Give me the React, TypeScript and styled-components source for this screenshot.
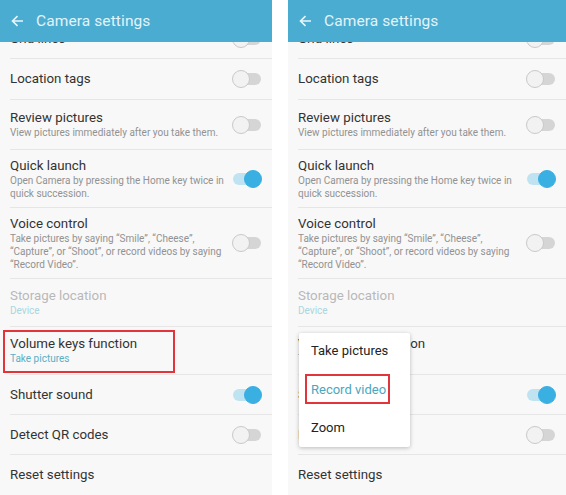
import styled, { createGlobalStyle } from "styled-components";

const GlobalStyle = createGlobalStyle`
  html, body {
    margin: 0;
    padding: 0;
    background: #ffffff;
  }
  body {
    font-family: Roboto, "Liberation Sans", sans-serif;
  }
`;

type RowData = {
  title: string;
  sub?: string[];
  height: number;
  toggle?: "on" | "off";
  tone?: "normal" | "disabled" | "value";
  boxed?: boolean;
};

const rows: RowData[] = [
  { title: "Location tags", height: 41, toggle: "off" },
  {
    title: "Review pictures",
    sub: ["View pictures immediately after you take them."],
    height: 50,
    toggle: "off",
  },
  {
    title: "Quick launch",
    sub: ["Open Camera by pressing the Home key twice in", "quick succession."],
    height: 58,
    toggle: "on",
  },
  {
    title: "Voice control",
    sub: [
      "Take pictures by saying \u201cSmile\u201d, \u201cCheese\u201d,",
      "\u201cCapture\u201d, or \u201cShoot\u201d, or record videos by saying",
      "\u201cRecord Video\u201d.",
    ],
    height: 71,
    toggle: "off",
  },
  { title: "Storage location", sub: ["Device"], height: 48, tone: "disabled" },
  {
    title: "Volume keys function",
    sub: ["Take pictures"],
    height: 48,
    tone: "value",
    boxed: true,
  },
  { title: "Shutter sound", height: 40, toggle: "on" },
  { title: "Detect QR codes", height: 40, toggle: "off" },
  { title: "Reset settings", height: 40 },
];

function Toggle({ on }: { on: boolean }) {
  return (
    <Switch>
      <Track $on={on} />
      <Knob $on={on} />
    </Switch>
  );
}

function BackArrow() {
  return (
    <svg width="13" height="12" viewBox="0 0 13 12">
      <path
        d="M12 6H1.8M6.5 1.2L1.5 6l5 4.8"
        fill="none"
        stroke="#e8f5fa"
        strokeWidth="1.6"
      />
    </svg>
  );
}

function Screen({ width, withMenu }: { width: number; withMenu?: boolean }) {
  return (
    <Panel $width={width}>
      <Header>
        <BackArrow />
        <HeaderTitle>Camera settings</HeaderTitle>
      </Header>
      <List>
        <Row $height={40} $cut>
          <RowText>
            <Title>Grid lines</Title>
          </RowText>
          <Toggle on={false} />
        </Row>
        {rows.map((r) => (
          <Row key={r.title} $height={r.height} $last={r.title === "Reset settings"}>
            {r.boxed && !withMenu && <Highlight />}
            <RowText>
              <Title $tone={r.tone}>{r.title}</Title>
              {r.sub?.map((s) => (
                <Sub key={s} $tone={r.tone}>
                  {s}
                </Sub>
              ))}
            </RowText>
            {r.toggle && <Toggle on={r.toggle === "on"} />}
          </Row>
        ))}
        {withMenu && (
          <Menu>
            <MenuItem>Take pictures</MenuItem>
            <MenuItem $active>
              <MenuMark>Record video</MenuMark>
            </MenuItem>
            <MenuItem>Zoom</MenuItem>
          </Menu>
        )}
      </List>
    </Panel>
  );
}

export default function App() {
  return (
    <>
      <GlobalStyle />
      <Page>
        <Screen width={272} />
        <Screen width={278} withMenu />
      </Page>
    </>
  );
}

const Page = styled.div`
  display: flex;
  gap: 16px;
  width: 566px;
  height: 495px;
  overflow: hidden;
`;

const Panel = styled.div<{ $width: number }>`
  width: ${({ $width }) => $width}px;
  flex-shrink: 0;
  height: 495px;
  display: flex;
  flex-direction: column;
  background: #f8f8f8;
  overflow: hidden;
`;

const Header = styled.div`
  height: 42px;
  flex-shrink: 0;
  background: #4aacd0;
  display: flex;
  align-items: center;
  gap: 12px;
  padding-left: 11px;
  position: relative;
  z-index: 2;
`;

const HeaderTitle = styled.span`
  color: #e3f3f9;
  font-size: 15.5px;
  letter-spacing: 0.1px;
`;

const List = styled.div`
  position: relative;
  flex: 1;
`;

const Row = styled.div<{ $height: number; $cut?: boolean; $last?: boolean }>`
  position: relative;
  height: ${({ $height }) => $height}px;
  margin-top: ${({ $cut }) => ($cut ? "-23px" : "0")};
  margin-left: 10px;
  padding-right: 10px;
  display: flex;
  align-items: center;
  justify-content: space-between;
  border-bottom: ${({ $last }) => ($last ? "none" : "1px solid #e6e6e6")};
  box-sizing: border-box;
`;

const RowText = styled.div`
  display: flex;
  flex-direction: column;
`;

const Title = styled.div<{ $tone?: string }>`
  font-size: 13.3px;
  line-height: 16px;
  color: ${({ $tone }) => ($tone === "disabled" ? "#b8b8b8" : "#333333")};
`;

const Sub = styled.div<{ $tone?: string }>`
  font-size: 10px;
  line-height: 13px;
  color: ${({ $tone }) =>
    $tone === "disabled" ? "#a9d6df" : $tone === "value" ? "#5aafc5" : "#929292"};
`;

const Switch = styled.div`
  position: relative;
  width: 30px;
  height: 18px;
  flex-shrink: 0;
  display: flex;
  align-items: center;
`;

const Track = styled.div<{ $on: boolean }>`
  width: 28px;
  height: 12px;
  margin-left: 1px;
  border-radius: 6px;
  background: ${({ $on }) => ($on ? "#bfe3f1" : "#d5d5d5")};
`;

const Knob = styled.div<{ $on: boolean }>`
  position: absolute;
  top: 0;
  left: ${({ $on }) => ($on ? "12px" : "0")};
  width: 18px;
  height: 18px;
  box-sizing: border-box;
  border-radius: 50%;
  background: ${({ $on }) => ($on ? "#3aafe2" : "#f2f2f2")};
  border: 1px solid ${({ $on }) => ($on ? "#3aafe2" : "#c9c9c9")};
`;

const Highlight = styled.div`
  position: absolute;
  left: -7px;
  top: 3px;
  width: 172px;
  height: 43px;
  box-sizing: border-box;
  border: 2px solid #e2353b;
`;

const Menu = styled.div`
  position: absolute;
  left: 11px;
  top: 291px;
  width: 111px;
  height: 114px;
  background: #ffffff;
  box-shadow: 0 1px 4px rgba(0, 0, 0, 0.25);
  border-radius: 2px;
  display: flex;
  flex-direction: column;
  justify-content: space-around;
  padding: 2px 0 4px;
  box-sizing: border-box;
  z-index: 3;
`;

const MenuItem = styled.div<{ $active?: boolean }>`
  font-size: 13px;
  padding-left: 12px;
  color: ${({ $active }) => ($active ? "#4aa7c0" : "#232323")};
`;

const MenuMark = styled.span`
  display: inline-block;
  margin-left: -6px;
  padding: 6px 2px 5px 4px;
  border: 2px solid #e2353b;
`;
